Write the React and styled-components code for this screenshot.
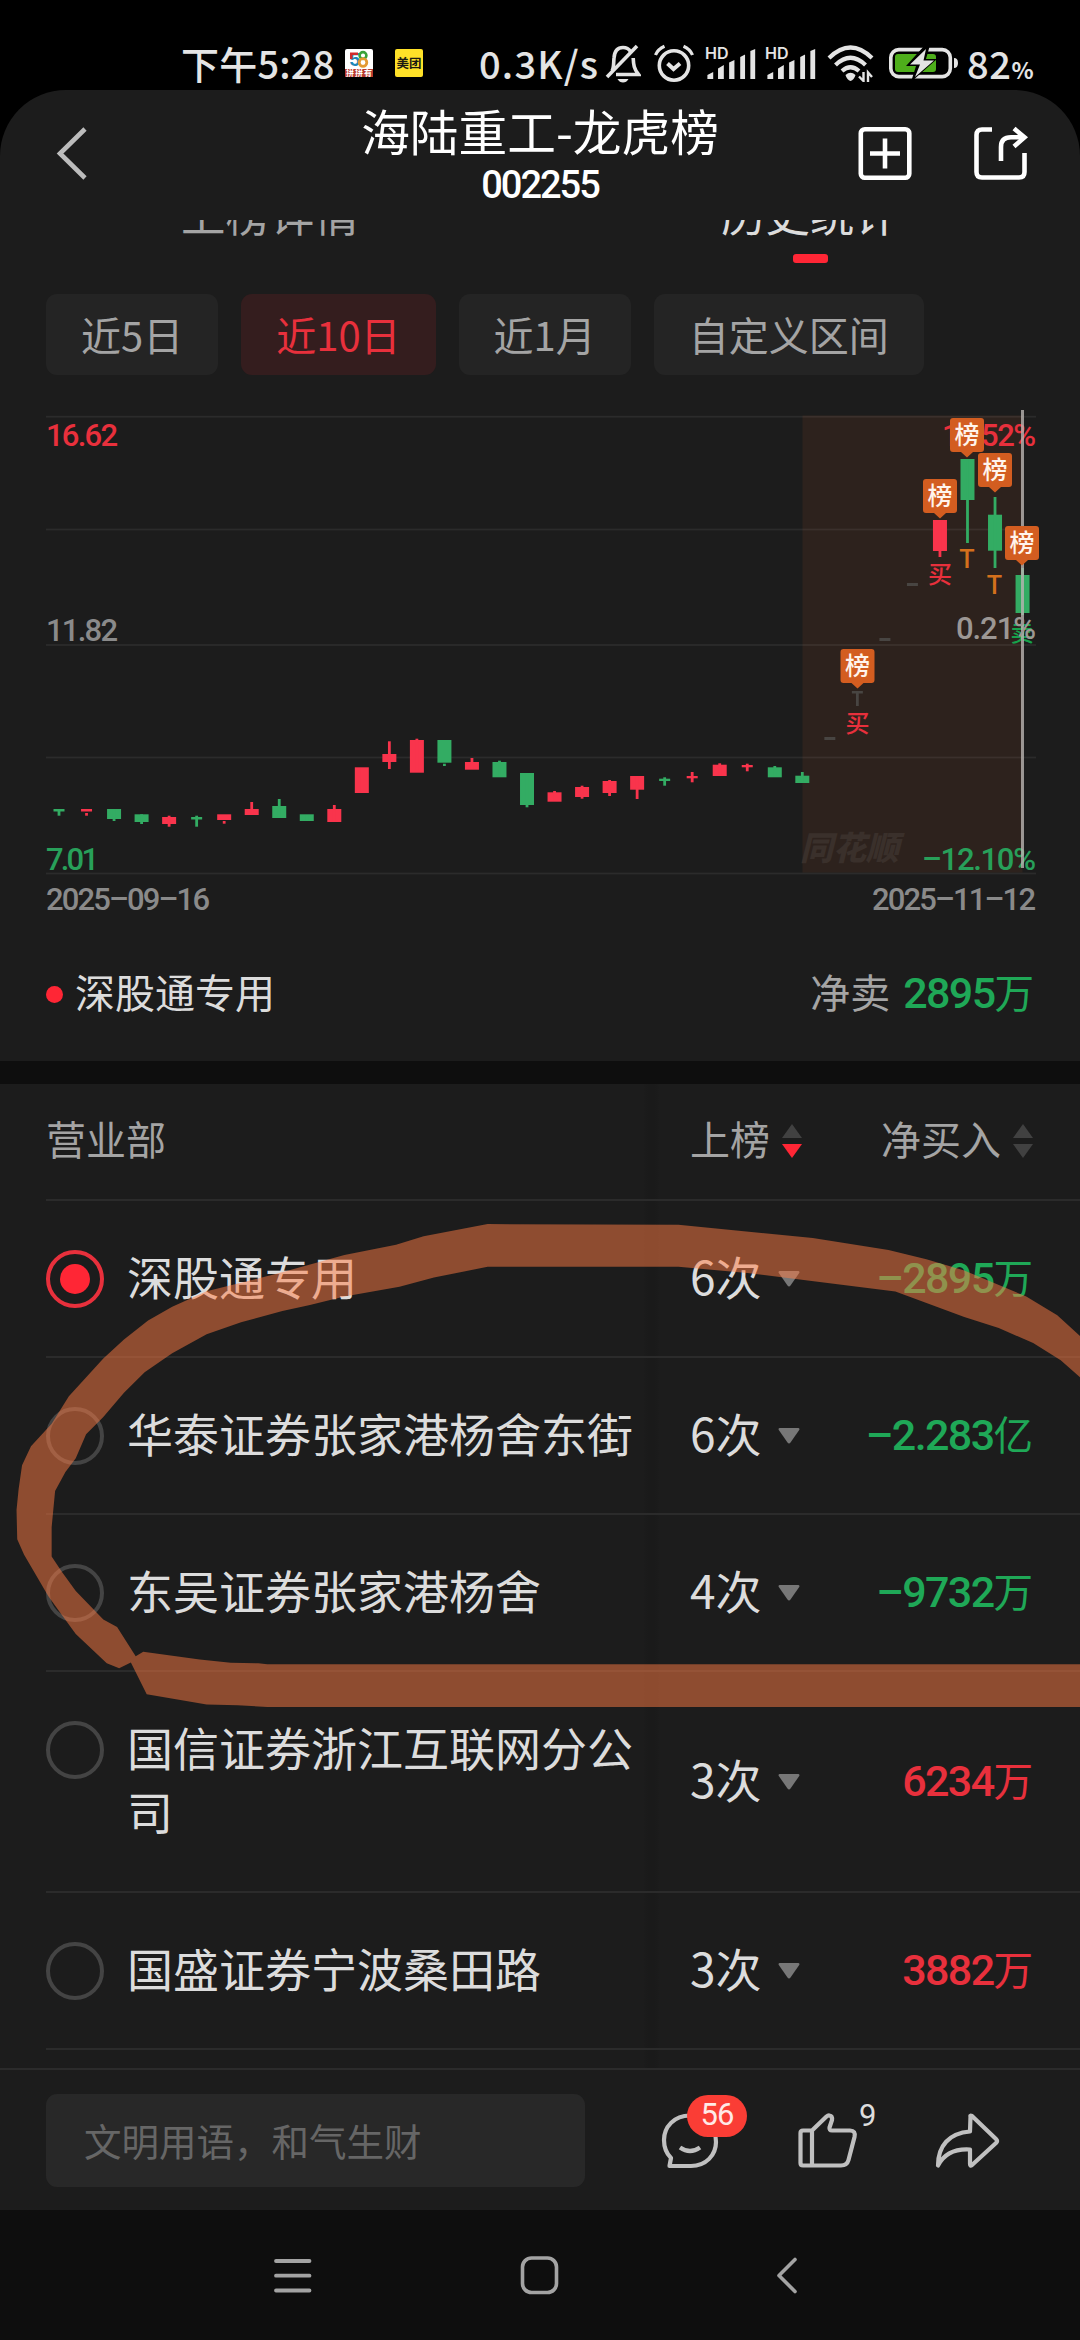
import React from "react";
import styled, { createGlobalStyle } from "styled-components";

const CJK = `"Noto Sans CJK SC", "Noto Sans", sans-serif`;
const DIGITS = `Roboto, "Noto Sans CJK SC", sans-serif`;

const color = {
  panel: "#1c1c1c",
  band: "#0e0e0e",
  line: "#2b2b2b",
  text: "#dcdcdc",
  muted: "#a4a4a4",
  red: "#e8303c",
  brightRed: "#ff2635",
  green: "#1fa857",
};

const GlobalStyle = createGlobalStyle`
  * { box-sizing: border-box; }
  body { margin: 0; background: #000; }
  svg { display: block; flex: none; }
`;

const Screen = styled.div`
  width: 1080px;
  height: 2340px;
  overflow: hidden;
  display: flex;
  flex-direction: column;
  background: #000;
  color: ${color.text};
  font-family: ${CJK};
  white-space: nowrap;
`;

/* ---------- status bar ---------- */

const StatusBar = styled.div`
  height: 90px;
  padding: 36px 0 0 181px;
  display: flex;
  align-items: center;
  color: #e4e4e4;
`;

const StatusText = styled.span`
  font-size: 38px;
  font-weight: 500;
  line-height: 48px;
  height: 48px;
  width: ${(p) => p.$width}px;
  flex: none;
  letter-spacing: ${(p) => p.$spacing || 0}px;
  margin-right: ${(p) => p.$gap || 0}px;
`;

const Percent = styled.span`
  font-size: 23px;
  font-weight: 600;
  letter-spacing: 0;
`;

const StatusIcon = styled.svg`
  margin-right: ${(p) => p.$gap || 0}px;
`;

const AppTile = styled.div`
  width: 28px;
  height: 28px;
  border-radius: 2px;
  margin-right: ${(p) => p.$gap}px;
  background: ${(p) => p.$bg};
  color: #1b1a12;
  font-size: 12.5px;
  font-weight: 700;
  line-height: 27px;
  text-align: center;
`;

function BellOff() {
  return (
    <StatusIcon $gap={13} width="36" height="40" viewBox="0 0 36 40" fill="none" stroke="#e4e4e4" strokeWidth="3.6">
      <path d="M7 28 C9 25 8.500 20 9 15 C9.500 8 13 4.500 18 4.500 C21.500 4.500 24 6 25.500 8.500" />
      <path d="M28.200 15 C28.500 22 29 26 33.500 31.500 H11" />
      <path d="M2 34 L32 3" />
      <path d="M12.500 36 H23.500 Q21.500 39.500 18 39.500 Q14.500 39.500 12.500 36Z" fill="#e4e4e4" stroke="none" />
    </StatusIcon>
  );
}

function Alarm() {
  return (
    <StatusIcon $gap={11} width="40" height="40" viewBox="0 0 40 40" fill="none" stroke="#e4e4e4" strokeWidth="3.6">
      <circle cx="20" cy="22.500" r="14.700" />
      <path d="M1.500 12 Q4 6 10.500 3.200 M38.500 12 Q36 6 29.500 3.200" strokeWidth="3.200" />
      <path d="M13.500 20.500 L19.500 26 L26 20.500" strokeWidth="4" />
    </StatusIcon>
  );
}

function Signal({ gap }) {
  return (
    <StatusIcon $gap={gap} width="51" height="36" viewBox="0 0 51 36" fill="#e4e4e4">
      <text x="0" y="14" fontFamily="Inter, sans-serif" fontWeight="600" fontSize="16" textLength="23.5" lengthAdjust="spacingAndGlyphs">
        HD
      </text>
      <path d="M2.500 34 V30 L8.500 27 V34Z M13.500 34 V23.500 L19.500 20 V34Z M25 34 V17.500 L30.500 15 V34Z M36.500 34 V12 L41.500 9.500 V34Z M47 34 L47 6 L52 4 V34Z" transform="scale(.965 1)" />
    </StatusIcon>
  );
}

function Wifi() {
  return (
    <StatusIcon $gap={14} width="48" height="38" viewBox="0 0 48 38" fill="none" stroke="#e4e4e4" strokeWidth="4.200">
      <path d="M2 14 Q23.500 -7 45 14" />
      <path d="M8.500 21 Q23.500 6.500 38.500 21" />
      <path d="M15 27 Q23.500 19.500 32 27" />
      <path d="M18.500 31 Q23.500 26.500 28.500 31 Q27 36 23.500 37 Q20 36 18.500 31Z" fill="#e4e4e4" stroke="none" />
      <path d="M36.500 28 V37 L32 32.500 M41 38 V28.500 L45 33" strokeWidth="2.400" />
    </StatusIcon>
  );
}

function Battery() {
  return (
    <StatusIcon $gap={8} width="70" height="34" viewBox="0 0 70 34">
      <rect x="1.800" y="3.600" width="59.500" height="27" rx="8" fill="none" stroke="#e4e4e4" strokeWidth="3.600" />
      <rect x="6" y="8" width="41" height="18" rx="3" fill="#4eae1b" />
      <path d="M65 12 Q69 12 69 17 Q69 22 65 22Z" fill="#e4e4e4" />
      <path d="M36 -1 L17 20 H27 L22 36 L48 13 H37 L41 -1Z" fill="#000" />
      <path d="M37 3 L21 18.500 H31 L26 31 L45 14.500 H34.500Z" fill="#e4e4e4" />
    </StatusIcon>
  );
}

/* ---------- header ---------- */

const Panel = styled.main`
  height: 2250px;
  display: flex;
  flex-direction: column;
  background: ${color.panel};
  border-radius: 66px 66px 0 0;
  overflow: hidden;
`;

const Header = styled.header`
  height: 130px;
  flex: none;
  display: grid;
  grid-template-columns: 300px 1fr 300px;
`;

const HeaderBack = styled.div`
  padding: 34px 0 0 54px;
`;

const Titles = styled.div`
  display: flex;
  flex-direction: column;
  align-items: center;
  color: #fff;
`;

const Title = styled.h1`
  margin: 12px 0 0;
  font-size: 48.7px;
  font-weight: 400;
  line-height: 56px;
`;

const Code = styled.div`
  margin-top: 9px;
  font-family: ${DIGITS};
  font-size: 38px;
  font-weight: 500;
  line-height: 36px;
  letter-spacing: -2px;
`;

const HeaderActions = styled.div`
  display: flex;
  gap: 60px;
  padding: 35px 0 0 77px;
`;

/* ---------- tabs ---------- */

const Tabs = styled.nav`
  height: 43px;
  flex: none;
  display: grid;
  grid-template-columns: 1fr 1fr;
  grid-template-rows: 43px;
  overflow: hidden;
`;

const Tab = styled.div`
  height: 43px;
  display: flex;
  flex-direction: column;
  align-items: center;
  justify-content: flex-end;
  color: ${(p) => (p.$active ? color.text : color.muted)};
  font-size: 44.5px;
  line-height: 56px;
`;

const TabMark = styled.i`
  flex: none;
  width: 35px;
  height: 9px;
  margin-top: 13px;
  border-radius: 3px;
  background: ${(p) => (p.$active ? color.brightRed : "transparent")};
`;

const Chips = styled.div`
  display: flex;
  gap: 23px;
  padding: 31px 46px 0;
  height: 147px;
  flex: none;
`;

const Chip = styled.div`
  height: 81px;
  padding: 0 35px;
  border-radius: 11px;
  background: ${(p) => (p.$active ? "#341d1e" : "#242424")};
  color: ${(p) => (p.$active ? color.red : color.muted)};
  font-size: 40px;
  line-height: 80px;
`;

/* ---------- chart ---------- */

const UP = "#f9344c";
const DOWN = "#33ac63";
const FLAT = "#484542";

// [bodyTop, bodyBottom, wickTop, wickBottom, colour, narrow]
const candles = [
  [809, 811.5, 809, 815.7, DOWN, 1], [809, 811.5, 813, 815.7, UP, 1],
  [809, 819, 809, 821, DOWN], [814.3, 822, 814.3, 824, DOWN],
  [817, 824, 815.7, 826.7, UP], [817, 819.5, 815.7, 826.7, DOWN, 1],
  [814.3, 820, 821, 823.7, UP], [809, 815, 802, 815, UP],
  [806, 818, 799, 818, DOWN], [814.3, 821, 815, 821, DOWN],
  [809, 822, 805, 822, UP], [767.3, 793, 768, 793, UP],
  [754, 762, 741.3, 769, UP], [740, 772.7, 738.7, 772, UP],
  [740, 762.7, 763.7, 766, DOWN], [762, 769.7, 758, 769, UP],
  [762, 777.3, 760.7, 777, DOWN], [773, 805, 773, 807.3, DOWN],
  [792.3, 801.7, 791, 801, UP], [787, 797, 785.7, 798.7, UP],
  [781, 793, 780, 796, UP], [776, 789.7, 776, 799, UP],
  [778.7, 781, 777.3, 785.7, DOWN, 1], [776, 778.3, 772, 782.3, UP, 1],
  [764.7, 776, 763.3, 776, UP], [765, 767.3, 763.7, 771.3, UP, 1],
  [767.3, 777.3, 766, 777, DOWN], [775.7, 783, 772, 783, DOWN],
  [737, 740, 737, 740, FLAT, 1], [691, 693.5, 691, 706, FLAT, 1],
  [638, 641, 638, 641, FLAT, 1], [583, 586, 583, 586, FLAT, 1],
  [520, 551, 520, 557, UP], [459, 500, 459, 543, DOWN],
  [514.7, 550.7, 497, 568, DOWN], [575, 613, 568, 615, DOWN],
];

const flags = [[857.5, 649], [940, 479], [967, 418], [995, 453], [1022, 526]];
const grid = [416.7, 529.5, 645, 757.5, 873.5];

const ChartArea = styled.section`
  height: 510px;
  flex: none;
`;

const Label = styled.text`
  font-family: ${DIGITS};
  font-size: 31px;
  font-weight: 500;
  fill: ${(p) => p.$fill || "#8a8a8a"};
`;

const Mark = styled.text`
  font-family: ${CJK};
  font-size: ${(p) => p.$size || 24}px;
  font-weight: ${(p) => p.$weight || 500};
  fill: ${(p) => p.$fill};
  text-anchor: middle;
`;

const Watermark = styled.text`
  font-family: ${CJK};
  font-size: 33px;
  font-weight: 900;
  font-style: italic;
  fill: #3a302b;
`;

function Chart() {
  return (
    <ChartArea>
      <svg width="1080" height="510" viewBox="0 410 1080 510">
        <rect x="802.5" y="415.5" width="220" height="457" fill="#2d221d" />
        {grid.map((y) => (
          <rect key={y} x="46" y={y - 0.9} width="990" height="1.800" fill="#fff" opacity=".065" />
        ))}
        <Watermark x="800" y="860">同花顺</Watermark>
        <Label x="46" y="446" $fill={color.red} textLength="72">16.62</Label>
        <Label x="46" y="641" textLength="72">11.82</Label>
        <Label x="46" y="870" $fill="#28a05a" textLength="53">7.01</Label>
        <Label x="46" y="910" textLength="164">2025–09–16</Label>
        <Label x="872" y="910" textLength="164">2025–11–12</Label>
        <Label x="942" y="446" $fill={color.red} textLength="94">12.52%</Label>
        <Label x="922" y="870" $fill="#28a05a" textLength="114">–12.10%</Label>
        {candles.map(([t, b, wt, wb, fill, narrow], i) => {
          const x = 59 + 27.53 * i;
          const half = narrow ? 5.5 : 7;
          return (
            <g key={i} fill={fill}>
              <rect x={x - half} y={t} width={half * 2} height={b - t} />
              <rect x={x - 1.4} y={wt} width="2.800" height={wb - wt} />
            </g>
          );
        })}
        <Mark x="857.5" y="732" $fill={color.red}>买</Mark>
        <Mark x="940" y="583" $fill={color.red}>买</Mark>
        <Mark x="967" y="568" $fill="#d4701c" $size={26}>T</Mark>
        <Mark x="994.5" y="594" $fill="#d4701c" $size={26}>T</Mark>
        <Mark x="1022" y="641" $fill="#16a34c" $size={23}>卖</Mark>
        <rect x="1021" y="410" width="3" height="458" fill="#b9b4b2" opacity=".8" />
        <Label x="956" y="639" $fill="#9c9794" textLength="80">0.21%</Label>
        {flags.map(([x, y]) => (
          <g key={x}>
            <path d={`M${x - 17} ${y + 3} q0 -3 3 -3 h28 q3 0 3 3 v28 q0 3 -3 3 h-8 l-6 5.500 l-6 -5.500 h-8 q-3 0 -3 -3z`} fill="#d35d20" />
            <Mark x={x} y={y + 26} $fill="#fff4ec" $size={25}>榜</Mark>
          </g>
        ))}
      </svg>
    </ChartArea>
  );
}

/* ---------- selected seat summary ---------- */

const Summary = styled.section`
  height: 141px;
  flex: none;
  padding: 41px 46px 0 46px;
  display: flex;
  align-items: flex-start;
  font-size: 40px;
  line-height: 60px;
`;

const Dot = styled.i`
  width: 17px;
  height: 17px;
  margin: 25px 12px 0 0;
  border-radius: 50%;
  background: ${color.brightRed};
`;

const SummaryLabel = styled.span`
  margin-left: auto;
  margin-right: 13px;
  color: ${color.muted};
`;

const AmountBox = styled.span`
  display: flex;
  justify-content: flex-end;
  align-items: baseline;
  color: ${(p) => (p.$up ? color.red : color.green)};
  font-size: 39.5px;
  line-height: 60px;
`;

const AmountDigits = styled.b`
  font-family: Roboto, sans-serif;
  font-size: 43px;
  font-weight: 500;
  letter-spacing: -1.6px;
`;

function Amount({ value, unit, up }) {
  return (
    <AmountBox $up={up}>
      <AmountDigits>{value}</AmountDigits>
      {unit}
    </AmountBox>
  );
}

const Band = styled.div`
  height: 23px;
  flex: none;
  background: ${color.band};
`;

/* ---------- table ---------- */

const Table = styled.section`
  position: relative;
  height: 984px;
  flex: none;
  padding-left: 46px;
  overflow: hidden;
  background: linear-gradient(90deg, transparent 643px, #1a1a1a 648px, #1a1a1a 655px, transparent 660px);
`;

const HeadRow = styled.div`
  height: 117px;
  display: grid;
  grid-template-columns: 644px 191px 1fr;
  align-items: center;
  border-bottom: 2px solid ${color.line};
  color: ${color.muted};
  font-size: 40px;
  line-height: 60px;
  padding-bottom: 7px;
`;

const HeadCell = styled.div`
  display: flex;
  align-items: center;
  gap: 12px;
`;

const Arrows = styled.svg`
  margin-top: 5px;
`;

function SortArrows({ down }) {
  return (
    <Arrows width="20" height="34" viewBox="0 0 20 34">
      <path d="M10 0 L20 14 H0Z" fill="#414141" />
      <path d="M0 20 H20 L10 34Z" fill={down ? color.brightRed : "#414141"} />
    </Arrows>
  );
}

const Row = styled.div`
  display: grid;
  grid-template-columns: 81px 563px 140px 203px;
  align-items: center;
  padding: 44px 0 47px;
  border-bottom: 2px solid ${color.line};
`;

const Radio = styled.i`
  align-self: start;
  width: 58px;
  height: 58px;
  margin-top: 5px;
  border-radius: 50%;
  border: 4px solid ${(p) => (p.$on ? "#e8303c" : "#444")};
  display: grid;
  place-items: center;

  &::after {
    content: "";
    width: 30px;
    height: 30px;
    border-radius: 50%;
    background: ${(p) => (p.$on ? color.brightRed : "transparent")};
  }
`;

const Seat = styled.div`
  width: 508px;
  font-size: 46px;
  line-height: 64px;
  white-space: normal;
  word-break: break-all;
  margin-top: -2px;
  margin-bottom: 2px;
`;

const Times = styled.div`
  display: flex;
  align-items: center;
  gap: 16px;
  font-size: 46px;
  line-height: 60px;
  margin-top: -4px;
`;

const CaretIcon = styled.svg`
  margin-top: 7px;
`;

function Caret() {
  return (
    <CaretIcon width="22" height="16" viewBox="0 0 22 16">
      <path d="M1.500 0 H20.500 Q22 .5 21.200 2 L12.500 14.500 Q11 16.500 9.500 14.500 L.8 2 Q0 .5 1.500 0Z" fill="#777" />
    </CaretIcon>
  );
}

const Stroke = styled.svg`
  position: absolute;
  left: 0;
  top: 116px;
  pointer-events: none;
`;

const seats = [
  { name: "深股通专用", times: "6次", value: "–2895", unit: "万", on: true },
  { name: "华泰证券张家港杨舍东街", times: "6次", value: "–2.283", unit: "亿" },
  { name: "东吴证券张家港杨舍", times: "4次", value: "–9732", unit: "万" },
  { name: "国信证券浙江互联网分公司", times: "3次", value: "6234", unit: "万", up: true },
  { name: "国盛证券宁波桑田路", times: "3次", value: "3882", unit: "万", up: true },
];

function HandStroke() {
  return (
    <Stroke width="1080" height="540" viewBox="0 0 1568 1568" preserveAspectRatio="none">
      <path
        fill="rgb(255,124,68)"
        fillOpacity=".5"
        d="M1568 395 L1535 335 L1490 280 L1400 205 L1345 172 L1290 145 L1180 110 L985 72 L708 70 L615 105 L575 130 L500 160 L400 215 L300 265 L250 310 L215 350 L180 405 L150 460 L100 570 L75 650 L45 715 L32 770 L27 840 L24 900 L25 985 L35 1030 L70 1150 L88 1200 L110 1260 L155 1345 L173 1360 L190 1343 L213 1435 L300 1465 L345 1467 L388 1472 L1568 1472 V1348 H388 L375 1345 L335 1344 L290 1334 L208 1312 L197 1325 L170 1240 L150 1218 L110 1135 L90 1080 L75 1035 V950 L80 845 L95 790 L110 750 L125 680 L150 630 L180 560 L210 500 L250 445 L300 390 L350 355 L410 322 L450 305 L500 280 L580 252 L630 225 L708 194 H985 L1085 212 L1190 238 L1300 266 L1400 340 L1450 372 L1500 415 L1540 465 L1568 515Z"
      />
    </Stroke>
  );
}

/* ---------- bottom bars ---------- */

const ActionBar = styled.footer`
  height: 142px;
  flex: none;
  border-top: 2px solid ${color.line};
  padding: 24px 0 0 46px;
  display: flex;
  align-items: flex-start;
`;

const CommentBox = styled.div`
  width: 539px;
  height: 93px;
  padding-left: 38px;
  border-radius: 11px;
  background: #282828;
  color: #666;
  font-size: 37.5px;
  line-height: 91px;
`;

const IconSlot = styled.div`
  position: relative;
  margin: 18px 0 0 ${(p) => p.$left}px;
`;

const Badge = styled.span`
  position: absolute;
  left: 27px;
  top: -17px;
  width: 60px;
  height: 42px;
  border-radius: 21px;
  background: #fa3d35;
  color: #ffe9e7;
  font-family: Roboto, sans-serif;
  font-size: 31px;
  line-height: 40px;
  text-align: center;
  letter-spacing: -1px;
`;

const Likes = styled.span`
  position: absolute;
  left: 61px;
  top: -12px;
  font-family: Roboto, sans-serif;
  font-size: 31px;
  line-height: 32px;
`;

const NavBar = styled.div`
  height: 130px;
  flex: none;
  background: ${color.band};
  display: flex;
  padding: 44px 0 0 272px;
`;

const NavIcon = styled.svg`
  margin-right: ${(p) => p.$gap || 0}px;
`;

export default function App() {
  return (
    <Screen>
      <GlobalStyle />
      <StatusBar>
        <StatusText $width={164} $spacing={0.2}>下午5:28</StatusText>
        <AppTile $gap={22} $bg="#fff">
          <svg width="28" height="28" viewBox="0 0 28 28">
            <g fontFamily="Inter, sans-serif" fontWeight="700">
              <text x="4" y="17" fontSize="18" fill="#1d88b8">5</text>
              <path d="M5 3.500 H13 V6 H7.500 V10 H5Z" fill="#cf2b2b" />
              <circle cx="18" cy="6.500" r="3.400" fill="none" stroke="#3aa23a" strokeWidth="2.600" />
              <circle cx="18" cy="13.500" r="3.800" fill="none" stroke="#e39a32" strokeWidth="2.800" />
            </g>
            <rect y="20" width="28" height="8" fill="#b93a2c" />
            <text x="1" y="27" fontSize="8" fontWeight="700" fill="#fff" fontFamily="Noto Sans CJK SC, sans-serif" textLength="26">拼拼有</text>
          </svg>
        </AppTile>
        <AppTile $gap={56} $bg="#ffe128">美团</AppTile>
        <StatusText $width={119} $gap={7} $spacing={1.2}>0.3K/s</StatusText>
        <BellOff />
        <Alarm />
        <Signal gap={9} />
        <Signal gap={11} />
        <Wifi />
        <Battery />
        <StatusText $width={70} $spacing={0.6}>82<Percent>%</Percent></StatusText>
      </StatusBar>

      <Panel>
        <Header>
          <HeaderBack>
            <svg width="36" height="58" viewBox="0 0 36 58" fill="none" stroke="#bcbcbc" strokeWidth="4.600">
              <path d="M31 5 L6 29.500 L31 54" />
            </svg>
          </HeaderBack>
          <Titles>
            <Title>海陆重工-龙虎榜</Title>
            <Code>002255</Code>
          </Titles>
          <HeaderActions>
            <svg width="56" height="56" viewBox="0 0 56 56" fill="none" stroke="#fff" strokeWidth="4.600">
              <rect x="3.800" y="4.300" width="48.500" height="48.500" rx="4" />
              <path d="M13 28.500 H43 M28 13.500 V43.500" />
            </svg>
            <svg width="60" height="56" viewBox="0 0 60 56" fill="none" stroke="#fff" strokeWidth="4.600">
              <path d="M19 4.500 H9 Q3.500 4.500 3.500 10 V47 Q3.500 52.500 9 52.500 H46 Q51.500 52.500 51.500 47 V28" />
              <path d="M28 36 V22 Q28 12.300 38 12.300 H51" />
              <path d="M41 3.500 L51.500 12.300 L41 21.500" />
            </svg>
          </HeaderActions>
        </Header>

        <Tabs>
          <Tab>上榜详情<TabMark /></Tab>
          <Tab $active>历史统计<TabMark $active /></Tab>
        </Tabs>

        <Chips>
          <Chip>近5日</Chip>
          <Chip $active>近10日</Chip>
          <Chip>近1月</Chip>
          <Chip>自定义区间</Chip>
        </Chips>

        <Chart />

        <Summary>
          <Dot />
          深股通专用
          <SummaryLabel>净卖</SummaryLabel>
          <Amount value="2895" unit="万" />
        </Summary>
        <Band />

        <Table>
          <HeadRow>
            <HeadCell>营业部</HeadCell>
            <HeadCell>上榜<SortArrows down /></HeadCell>
            <HeadCell>净买入<SortArrows /></HeadCell>
          </HeadRow>
          {seats.map((s) => (
            <Row key={s.name}>
              <Radio $on={s.on} />
              <Seat>{s.name}</Seat>
              <Times>{s.times}<Caret /></Times>
              <Amount value={s.value} unit={s.unit} up={s.up} />
            </Row>
          ))}
          <HandStroke />
        </Table>

        <ActionBar>
          <CommentBox>文明用语，和气生财</CommentBox>
          <IconSlot $left={75}>
            <svg width="60" height="58" viewBox="0 0 60 58" fill="none" stroke="#c0c0c0" strokeWidth="4.200">
              <path d="M30 3.500 C14 3.500 4 15 4 28 C4 36 7 42 11 46 L9.500 54 H31 C46 54 56 43 56 30 C56 15 45 3.500 30 3.500Z" strokeLinejoin="round" />
              <path d="M20 35.500 Q30 42.500 40 35.500" />
            </svg>
            <Badge>56</Badge>
          </IconSlot>
          <IconSlot $left={78}>
            <svg width="60" height="58" viewBox="0 0 60 58" fill="none" stroke="#c0c0c0" strokeWidth="4.200" strokeLinejoin="round">
              <path d="M14 18.500 H5 Q2.500 18.500 2.500 21 V51 Q2.500 53.500 5 53.500 H43 Q49 53.500 50.500 48 L56.500 25 Q58 18.500 52 18.500 H34 Q31 18.500 31.500 15.500 L34 8 Q34.500 4 31.500 3.500 Q30 3.200 28.500 4.500 L14 18.500 V53.500" />
            </svg>
            <Likes>9</Likes>
          </IconSlot>
          <IconSlot $left={76}>
            <svg width="66" height="58" viewBox="0 0 66 58" fill="none" stroke="#c0c0c0" strokeWidth="4.200" strokeLinejoin="round">
              <path d="M36.500 4.500 Q36 3 38 4 L62 27 Q64 29 62 31 L38 53 Q36 54.500 36 52 V37.500 C20 36.500 10 42 4 53.500 C4 34 15 21 36 19.500Z" />
            </svg>
          </IconSlot>
        </ActionBar>

        <NavBar>
          <NavIcon $gap={206} width="42" height="44" viewBox="0 0 42 44" stroke="#a3a3a3" strokeWidth="3.800" strokeLinecap="round">
            <path d="M4 7 H37.500 M4 21.700 H37.500 M4 36.500 H37.500" />
          </NavIcon>
          <NavIcon $gap={212} width="42" height="44" viewBox="0 0 42 44" fill="none" stroke="#a3a3a3" strokeWidth="3.600">
            <rect x="2.500" y="4" width="34" height="34.500" rx="9" />
          </NavIcon>
          <NavIcon width="26" height="44" viewBox="0 0 26 44" fill="none" stroke="#a3a3a3" strokeWidth="3.600" strokeLinecap="round" strokeLinejoin="round">
            <path d="M21 5.500 L5 21.500 L21 37.500" />
          </NavIcon>
        </NavBar>
      </Panel>
    </Screen>
  );
}
